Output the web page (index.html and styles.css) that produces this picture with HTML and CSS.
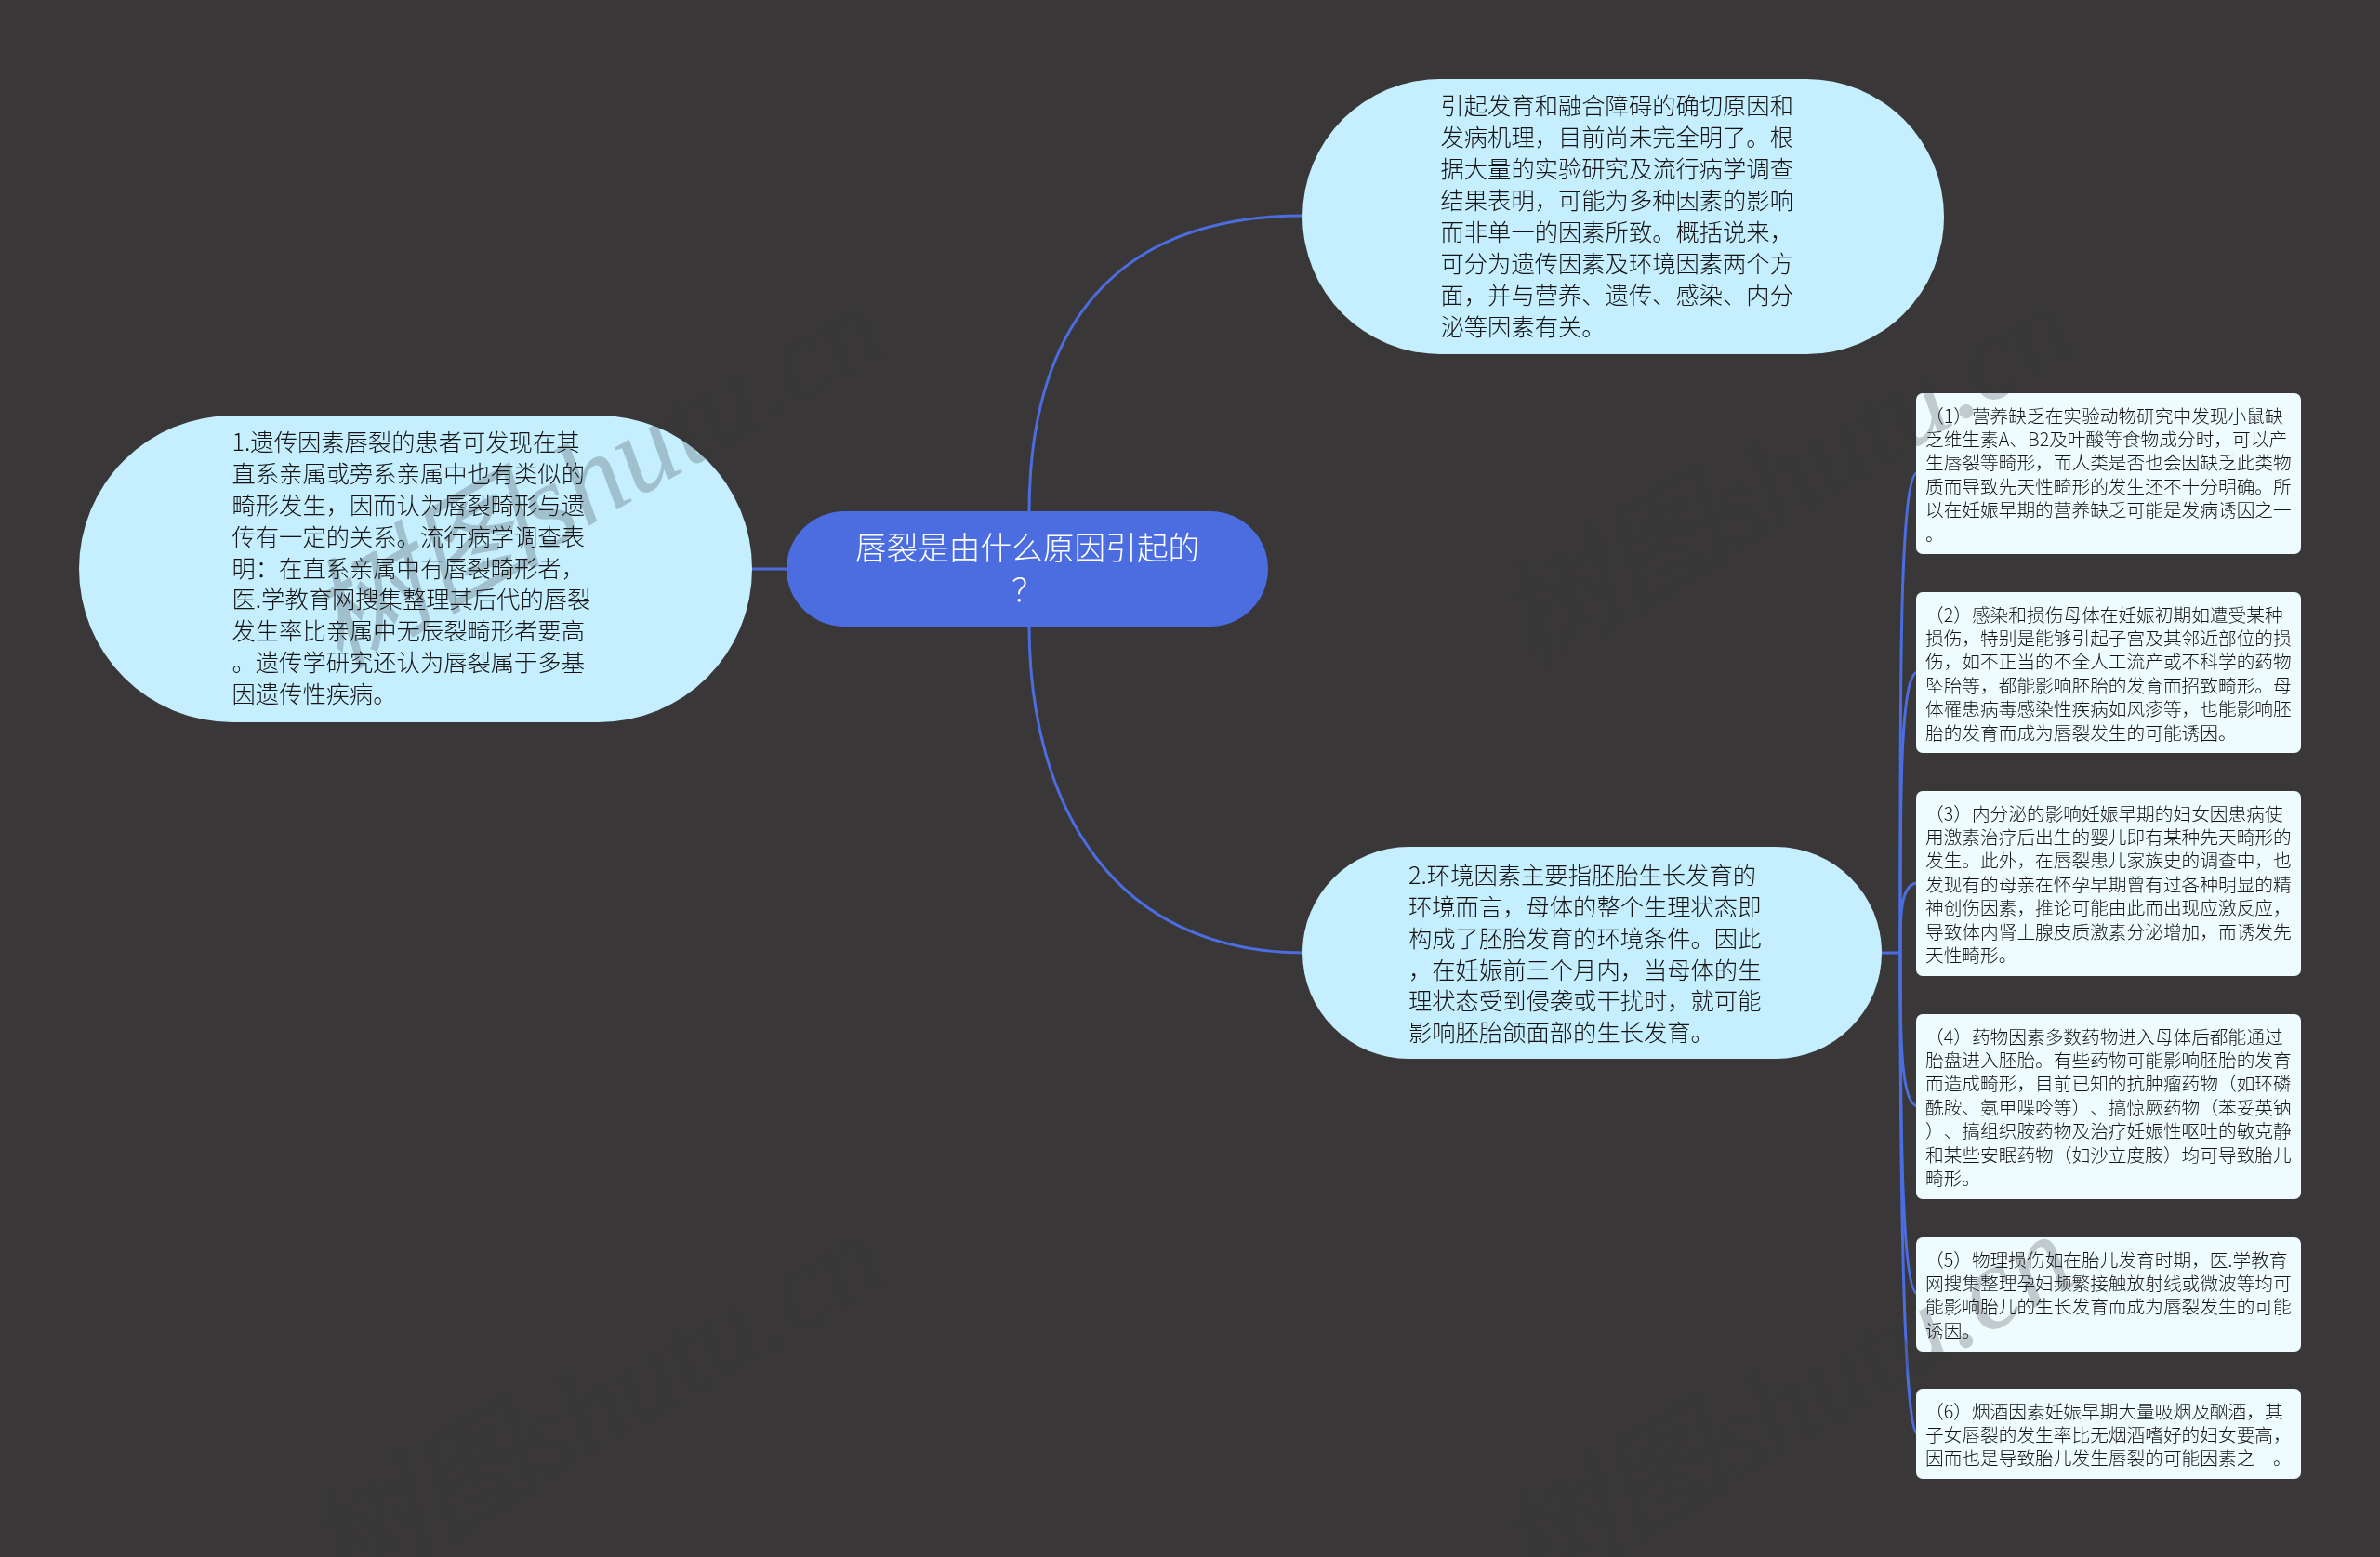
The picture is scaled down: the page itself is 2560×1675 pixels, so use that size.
FILE: index.html
```html
<!DOCTYPE html>
<html lang="zh-CN">
<head>
<meta charset="utf-8">
<title>唇裂是由什么原因引起的？</title>
<link rel="stylesheet" href="styles.css">
</head>
<body>
<main class="map">
  <svg class="links" width="2560" height="1675" viewBox="0 0 2560 1675" fill="none">
    <path d="M1107 552C1107 350 1200 232 1403 232"/>
    <path d="M1107 672C1107 870 1200 1025 1403 1025"/>
    <path d="M807 612H848"/>
    <path d="M2022 1025H2044"/>
    <path d="M2044 1025C2044 760 2042 508 2063 508"/>
    <path d="M2044 1025C2044 870 2043 723 2063 723"/>
    <path d="M2044 1025C2044 990 2043 950 2063 950"/>
    <path d="M2044 1025C2044 1100 2043 1190 2063 1190"/>
    <path d="M2044 1025C2044 1220 2046 1392 2063 1392"/>
    <path d="M2044 1025C2044 1300 2048 1543 2063 1543"/>
  </svg>

  <h1 class="node root">唇裂是由什么原因引起的<br>？</h1>

  <div class="node branch branch-left">1.遗传因素唇裂的患者可发现在其<br>直系亲属或旁系亲属中也有类似的<br>畸形发生，因而认为唇裂畸形与遗<br>传有一定的关系。流行病学调查表<br>明：在直系亲属中有唇裂畸形者，<br>医.学教育网搜集整理其后代的唇裂<br>发生率比亲属中无辰裂畸形者要高<br>。遗传学研究还认为唇裂属于多基<br>因遗传性疾病。</div>

  <div class="node branch branch-top">引起发育和融合障碍的确切原因和<br>发病机理，目前尚未完全明了。根<br>据大量的实验研究及流行病学调查<br>结果表明，可能为多种因素的影响<br>而非单一的因素所致。概括说来，<br>可分为遗传因素及环境因素两个方<br>面，并与营养、遗传、感染、内分<br>泌等因素有关。</div>

  <div class="node branch branch-env">2.环境因素主要指胚胎生长发育的<br>环境而言，母体的整个生理状态即<br>构成了胚胎发育的环境条件。因此<br>，在妊娠前三个月内，当母体的生<br>理状态受到侵袭或干扰时，就可能<br>影响胚胎颌面部的生长发育。</div>

  <div class="node card card-1">（1）营养缺乏在实验动物研究中发现小鼠缺<br>乏维生素A、B2及叶酸等食物成分时，可以产<br>生唇裂等畸形，而人类是否也会因缺乏此类物<br>质而导致先天性畸形的发生还不十分明确。所<br>以在妊娠早期的营养缺乏可能是发病诱因之一<br>。</div>

  <div class="node card card-2">（2）感染和损伤母体在妊娠初期如遭受某种<br>损伤，特别是能够引起子宫及其邻近部位的损<br>伤，如不正当的不全人工流产或不科学的药物<br>坠胎等，都能影响胚胎的发育而招致畸形。母<br>体罹患病毒感染性疾病如风疹等，也能影响胚<br>胎的发育而成为唇裂发生的可能诱因。</div>

  <div class="node card card-3">（3）内分泌的影响妊娠早期的妇女因患病使<br>用激素治疗后出生的婴儿即有某种先天畸形的<br>发生。此外，在唇裂患儿家族史的调查中，也<br>发现有的母亲在怀孕早期曾有过各种明显的精<br>神创伤因素，推论可能由此而出现应激反应，<br>导致体内肾上腺皮质激素分泌增加，而诱发先<br>天性畸形。</div>

  <div class="node card card-4">（4）药物因素多数药物进入母体后都能通过<br>胎盘进入胚胎。有些药物可能影响胚胎的发育<br>而造成畸形，目前已知的抗肿瘤药物（如环磷<br>酰胺、氨甲喋呤等）、搞惊厥药物（苯妥英钠<br>）、搞组织胺药物及治疗妊娠性呕吐的敏克静<br>和某些安眠药物（如沙立度胺）均可导致胎儿<br>畸形。</div>

  <div class="node card card-5">（5）物理损伤如在胎儿发育时期，医.学教育<br>网搜集整理孕妇频繁接触放射线或微波等均可<br>能影响胎儿的生长发育而成为唇裂发生的可能<br>诱因。</div>

  <div class="node card card-6">（6）烟酒因素妊娠早期大量吸烟及酗酒，其<br>子女唇裂的发生率比无烟酒嗜好的妇女要高，<br>因而也是导致胎儿发生唇裂的可能因素之一。</div>

  <div class="watermarks" aria-hidden="true">
    <span class="mark">树图shutu.cn</span>
    <span class="mark">树图shutu.cn</span>
    <span class="mark">树图shutu.cn</span>
    <span class="mark">树图shutu.cn</span>
  </div>
</main>
</body>
</html>
```
FILE: styles.css
```css
* { box-sizing: border-box; }
html, body { margin: 0; padding: 0; }
body {
  background: #393738;
  font-family: "Noto Sans CJK SC", "Noto Sans", sans-serif;
  text-spacing-trim: space-all;
  font-kerning: none;
}
.map {
  position: relative;
  width: 2560px;
  height: 1675px;
  overflow: hidden;
  background: #393738;
}
.links {
  position: absolute;
  left: 0;
  top: 0;
}
.links path {
  stroke: #4b6ddf;
  stroke-width: 3;
}
.node {
  position: absolute;
  margin: 0;
  white-space: nowrap;
}
.root {
  left: 846px;
  top: 550px;
  width: 518px;
  height: 124px;
  padding-top: 15px;
  border-radius: 62px;
  background: #4b6ddf;
  color: #fff;
  font-size: 33.7px;
  font-weight: 300;
  line-height: 45px;
  text-align: center;
}
.branch {
  display: flex;
  align-items: center;
  border-radius: 170px;
  background: #c5eeff;
  color: #141414;
  font-size: 25.3px;
  font-weight: 300;
  line-height: 33.9px;
}
.branch-left {
  left: 85px;
  top: 447px;
  width: 724px;
  height: 330px;
  padding: 0 0 3px 164.5px;
}
.branch-top {
  left: 1401px;
  top: 85px;
  width: 690px;
  height: 296px;
  padding: 0 0 2px 148.5px;
}
.branch-env {
  left: 1401px;
  top: 911px;
  width: 623px;
  height: 228px;
  padding: 1px 0 0 114px;
}
.card {
  left: 2061px;
  width: 414px;
  padding: 10.5px 10px;
  border-radius: 7px;
  background: #effcff;
  color: #141414;
  font-size: 19.7px;
  font-weight: 300;
  line-height: 25.4px;
}
.card-1 { top: 423px; }
.card-2 { top: 637px; }
.card-3 { top: 851px; }
.card-4 { top: 1091px; }
.card-5 { top: 1331px; }
.card-6 { top: 1494px; }
.watermarks {
  position: absolute;
  left: 0;
  top: 12px;
  display: grid;
  grid-template-columns: 1280px 1280px;
  grid-auto-rows: 1000px;
  place-items: center;
  pointer-events: none;
  mix-blend-mode: darken;
}
.mark {
  display: block;
  font-family: "Liberation Serif", "Noto Sans CJK SC", serif;
  font-style: italic;
  font-size: 128px;
  line-height: 1;
  white-space: nowrap;
  color: rgba(54, 54, 54, 0.25);
  transform: rotate(-30deg);
}
```
